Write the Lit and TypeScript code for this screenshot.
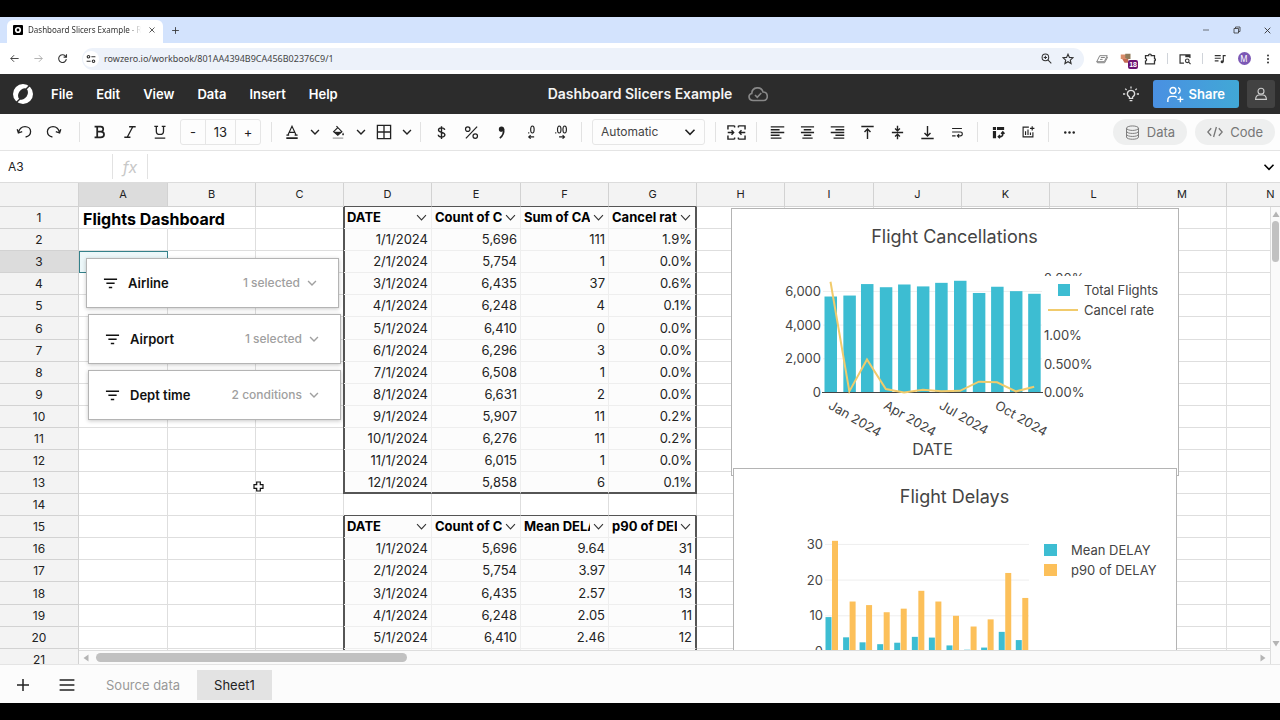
import { LitElement, html, css, svg } from "lit";
import { customElement, property } from "lit/decorators.js";
import { classMap } from "lit/directives/class-map.js";
import { styleMap } from "lit/directives/style-map.js";

const COLUMNS = "ABCDEFGHIJKLMN".split("");
const ROW_COUNT = 21;
const DAYS = [0, 31, 60, 91, 121, 152, 182, 213, 244, 274, 305, 335];
const FLIGHTS = [5696, 5754, 6435, 6248, 6410, 6296, 6508, 6631, 5907, 6276, 6015, 5858];
const CANCELLED = ["111", "1", "37", "4", "0", "3", "1", "2", "11", "11", "1", "6"];
const CANCEL_RATE = ["1.9%", "0.0%", "0.6%", "0.1%", "0.0%", "0.0%", "0.0%", "0.0%", "0.2%", "0.2%", "0.0%", "0.1%"];
const RATE = [1.95, 0.02, 0.58, 0.06, 0, 0.05, 0.02, 0.03, 0.19, 0.18, 0.02, 0.1];
const MEAN_DELAY = [9.64, 3.97, 2.57, 2.05, 2.46, 4.1, 3.9, 1.7, 0.5, 1.1, 5.5, 3.2];
const P90_DELAY = [31, 14, 13, 11, 12, 17, 14, 10, 7, 9, 22, 15];

interface Pivot {
  top: number;
  heads: string[];
  rows: string[][];
}

const PIVOTS: Pivot[] = [
  {
    top: 1,
    heads: ["DATE", "Count of CANCELLED", "Sum of CANCELLED", "Cancel rate"],
    rows: FLIGHTS.map((n, i) => [`${i + 1}/1/2024`, n.toLocaleString("en-US"), CANCELLED[i], CANCEL_RATE[i]]),
  },
  {
    top: 15,
    heads: ["DATE", "Count of CANCELLED", "Mean DELAY", "p90 of DELAY"],
    rows: FLIGHTS.map((n, i) => [`${i + 1}/1/2024`, n.toLocaleString("en-US"), MEAN_DELAY[i].toFixed(2), String(P90_DELAY[i])]),
  },
];

const SLICERS = [
  { name: "Airline", summary: "1 selected", left: 86, top: 75 },
  { name: "Airport", summary: "1 selected", left: 88, top: 131 },
  { name: "Dept time", summary: "2 conditions", left: 88, top: 187 },
];

const icon = (body: unknown, size = 16) =>
  html`<svg width=${size} height=${size} viewBox="0 0 16 16" fill="none" stroke="currentColor" stroke-width="1.3" aria-hidden="true">${body}</svg>`;

const ICONS = {
  undo: svg`<path d="M1.2 5.2 2.4 9l3.8-1.3M2.6 8.7C3.2 5 5.8 2.6 9 2.6c3.2 0 5.6 2.2 5.6 5 0 2.9-2 4.9-5 5.4"/>`,
  redo: svg`<path d="M14.8 5.2 13.6 9 9.8 7.7M13.4 8.7C12.8 5 10.2 2.6 7 2.6c-3.2 0-5.6 2.2-5.6 5 0 2.9 2 4.9 5 5.4"/>`,
  bold: svg`<path stroke-width="2" d="M1.800 1.800h6.9c4 0 4 5.8 0 5.8H5M8.7 7.6c5.200 0 5.200 6.600 0 6.600H1.800M4.800 1.800v12.400"/>`,
  italic: svg`<path stroke-width="1.5" d="M7 2h7.500M1.500 14h7M11.200 2 4.800 14"/>`,
  underline: svg`<path stroke-width="1.5" d="M1.5 1.6h4.3M10 1.6h4.3M3.8 1.6V7c0 5 8.2 5 8.2 0V1.6M2 15h12"/>`,
  textColor: svg`<path d="M3.2 11.6 8 1.4l4.8 10.2M5 8.4h6M1.6 11.6h3.2M11 11.6h3.4"/><path stroke-width="2" d="M1.5 15h13"/>`,
  fill: svg`<path d="M6.200 1.200 8.200 3.200M3 7.600l4.800-4.600 4.600 4.600-4.600 4z"/><path fill="currentColor" stroke="none" d="M3.4 7.600h9l-4.600 4zM13.800 8.6c1.400 2.200 1.200 3.200 0 3.200s-1.400-1 0-3.200z"/><path fill="#fff" stroke="none" d="M5.800 7 8 4.800 10.200 7z"/><path stroke="#aaa" stroke-width="1.6" d="M2 15h12"/>`,
  borders: svg`<path d="M1.4 1.4h13.2v13.2H1.4zM8 1.4v13.2M1.4 8h13.2"/>`,
  chevron: svg`<path stroke-width="1.6" d="m3.500 5.800 4.500 4.500 4.500-4.500"/>`,
  dollar: svg`<path stroke-width="1.5" d="M8 1.2v13.6M11.4 5.2C11 2.4 4.8 2.2 4.8 5.3c0 3.3 6.8 1.8 6.8 5.2 0 3.2-6.6 3.2-7.1-.1"/>`,
  percent: svg`<circle cx="4" cy="4.4" r="2.4"/><circle cx="12" cy="11.8" r="2.4"/><path d="M14 1.8 2 14.2"/>`,
  comma: svg`<circle cx="8" cy="4.4" r="2.2" fill="currentColor"/><path stroke-width="1.8" d="M10.2 4.2c.6 4-.8 7.400-4 9.800"/>`,
  lessDecimal: svg`<ellipse cx="9.6" cy="5.2" rx="2" ry="4"/><path d="M5.4 8.400v1.2M11.6 13.6H5.4M7.6 11.6l-2.2 2 2.2 2"/>`,
  moreDecimal: svg`<ellipse cx="6" cy="5.2" rx="2" ry="4"/><ellipse cx="12.200" cy="5.2" rx="2" ry="4"/><path d="M2 8.400v1.2M5.8 13.6H12M9.8 11.6l2.2 2-2.2 2"/>`,
  merge: svg`<path stroke-width="1.2" d="M6.4 2.4H.8v3M.8 10.6v3h5.6M9.6 2.4h5.6v3M15.2 10.6v3H9.6M6.4 2.4v1.4M9.6 2.4v1.4M6.4 13.6v-1.4M9.6 13.6v-1.4M.600 8h5M3.8 6.2 5.6 8 3.8 9.8M15.400 8h-5M12.2 6.2 10.4 8l1.8 1.8"/>`,
  alignLeft: svg`<path stroke-width="1.5" d="M.8 2h14.4M.8 5h9.4M.8 8h14.4M.8 11h9.4M.8 14h11.4"/>`,
  alignCenter: svg`<path stroke-width="1.5" d="M1 2h14M4 5h8M1 8h14M4 11h8M2.500 14h11"/>`,
  alignRight: svg`<path stroke-width="1.5" d="M.8 2h14.4M5.8 5h9.4M.8 8h14.4M5.8 11h9.4M3.8 14h11.4"/>`,
  alignTop: svg`<path stroke-width="1.5" d="M1.4 1.6h13.2M8 15V4M4.8 7.4 8 4.2l3.2 3.2"/>`,
  alignMiddle: svg`<path stroke-width="1.5" d="M2 8h12M8 .8v5M5.4 3.8 8 6.2l2.6-2.4M8 15.2v-5M5.4 12.2 8 9.8l2.6 2.4"/>`,
  alignBottom: svg`<path stroke-width="1.5" d="M1.4 14.4h13.2M8 1v11M4.8 8.6 8 11.8l3.2-3.2"/>`,
  wrap: svg`<path d="M2.4 4h11.2M2.4 8h9.4c3 0 3 4.4 0 4.4H8.6M10.4 10.4l-2 2 2 2M2.4 12.4h4"/>`,
  pivot: svg`<path fill="currentColor" stroke="none" d="M2 2h3.4v3.4H2zM6.4 2H14v3.4H6.4zM2 6.4h3.4V14H2z"/><path stroke-width="1.6" d="M8 12.4h1.6c2 0 3-1.2 3-3.2V8M10.8 9.4l1.8-2 1.8 2M9.6 10.6l-1.8 1.8 1.8 1.8"/>`,
  chart: svg`<path d="M9 2.4H2.4v11.2h11.2V8.4M5.2 11.4V7M8 11.4V5M10.8 11.4V8.6M12.8 1.4v5M10.3 3.9h5"/>`,
  more: svg`<g fill="currentColor" stroke="none"><circle cx="3.500" cy="8" r="1.300"/><circle cx="8" cy="8" r="1.300"/><circle cx="12.500" cy="8" r="1.300"/></g>`,
  database: svg`<g stroke-width="1"><ellipse cx="8" cy="3.400" rx="6.4" ry="2.4"/><path d="M1.6 3.4v9.4c0 3.2 12.8 3.2 12.8 0V3.4M1.6 6.6c0 3.2 12.8 3.2 12.8 0M1.6 9.8c0 3.2 12.8 3.2 12.8 0"/></g>`,
  code: svg`<path d="M4.2 4.2.8 8l3.4 3.8M11.8 4.2 15.2 8l-3.4 3.8M9.4 3 6.6 13"/>`,
  filter: svg`<path stroke-width="1.6" d="M1 3.4h14M3.6 7.8h8.8M6.2 12.2h3.6"/>`,
  plus: svg`<path stroke-width="1.5" d="M8 2v12M2 8h12"/>`,
  menu: svg`<path stroke-width="1.6" d="M.6 3h14.8M.6 8h14.8M.6 13h14.8"/>`,
  bulb: svg`<path d="M6.4 12.4V11C2.6 8.4 4.6 4.4 8 4.4s5.4 4 1.6 6.6v1.4zM6.6 14.6h2.8M8 .4v2M2.2 2.6l1.4 1.4M13.8 2.6l-1.4 1.4M0 8h2.200M13.800 8H16"/>`,
  people: svg`<circle cx="5.600" cy="4.2" r="2.800"/><path d="M.8 15v-1.600c0-2.400 1.400-3.600 3.600-3.600h2.400c1.200 0 2 .4 2.600 1M10.400 1.500c2.600.8 2.600 4.600 0 5.400M12.600 9.800v5.600M9.800 12.600h5.600"/>`,
  user: svg`<circle cx="8" cy="4.8" r="3.4"/><path d="M1.8 14.2c.2-3.6 2.2-5 4.2-5h4c2 0 4 1.4 4.2 5z"/>`,
  cloud: svg`<path d="M4 13.2C.2 13.2-.2 8.4 3 7.6 3.2 2 10.8 1.6 12 6.4c4.4 0 4.6 6.8.4 6.8zM5.6 8.8l1.8 1.8 3.2-3.4"/>`,
  back: svg`<path d="M14 8H2.6M7.4 3.2 2.6 8l4.8 4.8"/>`,
  forward: svg`<path d="M2 8h11.4M8.6 3.2 13.4 8l-4.8 4.8"/>`,
  reload: svg`<path stroke-width="1.6" d="M13.6 9A5.6 5.6 0 1 1 12 4.2L13.6 6M13.8 1.8V6H9.6"/>`,
  tune: svg`<g stroke-width="1.8"><circle cx="4" cy="4.4" r="2"/><circle cx="12" cy="11.6" r="2"/><path d="M8.6 4.4H15M1 11.6h6.4"/></g>`,
  close: svg`<path stroke-width="1.6" d="m3 3 10 10M13 3 3 13"/>`,
  minimize: svg`<path d="M2 8h12"/>`,
  restore: svg`<path stroke-width="1.6" d="M2 5h9v9H2zM5 5V2h9v9h-3"/>`,
  zoom: svg`<g stroke-width="1.5"><circle cx="6.4" cy="6.4" r="4.8"/><path d="m10 10 5 5M6.4 4v4.8M4 6.4h4.8"/></g>`,
  star: svg`<path stroke-width="1.5" d="m8 1.6 1.9 4.3 4.7.5-3.5 3.1 1 4.6L8 11.7l-4.1 2.4 1-4.6L1.4 6.4l4.7-.5z"/>`,
  pages: svg`<g stroke="#777" stroke-width="1.200"><path d="M5 3.600h10l-4 8H1zM1 11.600l1 1.400h9.500l4-7.500"/><path d="M6.400 6h5.400M5.400 8.600h3.400"/></g>`,
  puzzle: svg`<path stroke-width="1.7" d="M2 3.600h4.200c-.4-3 3.800-3 3.400 0H14V7.600c1.600 0 1.600 2.800 0 2.800v4.200H2v-3.800c2-.4 2-3.200 0-3.600z"/>`,
  sideSearch: svg`<path stroke-width="1.6" d="M6.6 13.4H1.4V2.6h13.2v4"/><path fill="currentColor" stroke="none" d="M8.4 2.6h6.2v3H8.4z"/><g stroke-width="1.5"><circle cx="11" cy="10.4" r="2.4"/><path d="m12.8 12.2 2.6 2.6"/></g>`,
  music: svg`<path stroke-width="1.6" d="M1 3.6h8M1 7h8M1 10.4h5M12.400 11.6V3.4h3.2"/><circle cx="10.8" cy="11.6" r="2" fill="currentColor" stroke="none"/>`,
  dots: svg`<g fill="currentColor" stroke="none"><circle cx="8" cy="2.4" r="1.6"/><circle cx="8" cy="8" r="1.6"/><circle cx="8" cy="13.6" r="1.6"/></g>`,
  extension: svg`<path fill="#d98c6a" stroke="none" d="M1 2h8v6H1z"/><path fill="#8f7a5a" stroke="none" d="M7 1h7v7H9L7 6z"/><path fill="#c46a52" stroke="none" d="M3 8h8v5H6z"/>`,
};

@customElement("browser-chrome")
class BrowserChrome extends LitElement {
  static styles = css`
    :host { display: block; font-family: "Noto Sans", "Open Sans", sans-serif; color: #333; }
    button { border: 0; padding: 0; background: none; color: inherit; display: grid; place-items: center; font: inherit; }
    svg { display: block; }
    .strip { height: 26px; background: #d3e3fd; display: flex; align-items: center; padding: 0 4px 0 7px; }
    .tab { align-self: flex-end; box-sizing: border-box; width: 156px; height: 23px; display: flex; align-items: center; gap: 5px; background: #fff; border-radius: 6px 6px 0 0; padding: 0 5px 4px 6px; font-size: 8px; }
    .favicon { width: 10px; height: 10px; background: #000; color: #fff; border-radius: 1px; display: grid; place-items: center; }
    .tab-title { flex: 1; overflow: hidden; white-space: nowrap; mask-image: linear-gradient(90deg, #000 90%, transparent); }
    .tab button { width: 12px; height: 12px; }
    .new { width: 24px; height: 20px; }
    .window { margin-left: auto; display: flex; }
    .window button { width: 31px; height: 20px; }
    .window button:last-child { width: 18px; margin-left: 6px; }
    .bar { height: 31px; background: #fff; display: flex; align-items: center; padding: 0 0 0 2px; }
    .nav { width: 24px; height: 24px; }
    .nav.off { color: #aaa; }
    .address { flex: 1; height: 22px; margin-left: 8px; border-radius: 11px; background: #edf2fa; display: flex; align-items: center; padding: 0 5px 0 1px; }
    .site { width: 16px; height: 16px; border-radius: 8px; background: #fff; margin-right: 5px; }
    .address input { flex: 1; min-width: 0; border: 0; padding: 0; background: none; font: 9px "Noto Sans", sans-serif; color: #444; }
    .address button:not(.site) { width: 22px; height: 20px; }
    .tools { display: flex; align-items: center; margin-left: 6px; }
    .tools button { width: 24px; height: 24px; }
    .rule { width: 1px; height: 11px; background: #d0d4da; margin: 0 5px; }
    .ext { position: relative; }
    .badge { position: absolute; right: 0; bottom: 2px; background: #6a1070; color: #fff; font: bold 7px/9px "Liberation Sans", sans-serif; padding: 0 1px; border-radius: 2px; }
    .avatar { width: 13px; height: 13px; border-radius: 50%; background: #7c58b5; color: #fff; font-size: 8px; line-height: 13px; }
  `;
  render() {
    return html`
      <div class="strip">
        <div class="tab">
          <span class="favicon">${icon(svg`<circle cx="8" cy="8" r="4.500" stroke-width="3.4"/>`, 8)}</span>
          <span class="tab-title">Dashboard Slicers Example - Row Zero</span>
          <button aria-label="Close tab">${icon(ICONS.close, 8)}</button>
        </div>
        <button class="new" aria-label="New tab">${icon(ICONS.plus, 9)}</button>
        <div class="window">
          <button aria-label="Minimize">${icon(ICONS.minimize, 8)}</button>
          <button aria-label="Restore">${icon(ICONS.restore, 8)}</button>
          <button aria-label="Close window">${icon(ICONS.close, 9)}</button>
        </div>
      </div>
      <div class="bar">
        <button class="nav" aria-label="Back">${icon(ICONS.back, 11)}</button>
        <button class="nav off" aria-label="Forward">${icon(ICONS.forward, 11)}</button>
        <button class="nav" aria-label="Reload">${icon(ICONS.reload, 11)}</button>
        <div class="address">
          <button class="site" aria-label="Site information">${icon(ICONS.tune, 10)}</button>
          <input aria-label="Address" .value=${"rowzero.io/workbook/801AA4394B9CA456B02376C9/1"} />
          <button aria-label="Zoom">${icon(ICONS.zoom, 11)}</button>
          <button aria-label="Bookmark">${icon(ICONS.star, 12)}</button>
        </div>
        <div class="tools">
          <button aria-label="Pages">${icon(ICONS.pages, 12)}</button>
          <button class="ext" aria-label="Extension">${icon(ICONS.extension, 12)}<span class="badge">18</span></button>
          <button aria-label="Extensions">${icon(ICONS.puzzle, 12)}</button>
          <span class="rule"></span>
          <button aria-label="Search side panel">${icon(ICONS.sideSearch, 12)}</button>
          <span class="rule"></span>
          <button aria-label="Media">${icon(ICONS.music, 12)}</button>
          <button aria-label="Profile"><span class="avatar">M</span></button>
          <button aria-label="More">${icon(ICONS.dots, 10)}</button>
        </div>
      </div>
    `;
  }
}

@customElement("workbook-header")
class WorkbookHeader extends LitElement {
  static styles = css`
    :host { display: grid; grid-template-columns: 1fr auto 1fr; align-items: center; height: 40px; background: #2c2c2c; color: #fff; }
    button { border: 0; padding: 0; background: none; color: inherit; font: 600 13px/20px Inter, sans-serif; }
    svg { display: block; }
    .menus { display: flex; align-items: center; gap: 23px; padding-left: 12px; }
    .menus svg { margin-right: -6px; }
    .title { display: flex; align-items: center; gap: 16px; font: 600 14px/20px Inter, sans-serif; color: #f4f4f4; padding-left: 36px; }
    .title svg { color: #888; }
    .actions { display: flex; align-items: center; justify-content: flex-end; gap: 8px; padding-right: 5px; }
    .bulb { color: #ddd; padding: 0 6px; }
    .share { height: 28px; display: flex; align-items: center; gap: 5px; padding: 0 14px; border-radius: 3px; background: linear-gradient(90deg, #4a90e2, #41a8d6); }
    .user { width: 28px; height: 28px; display: grid; place-items: center; border-radius: 3px; background: #424242; color: #ccc; }
  `;
  render() {
    return html`
      <nav class="menus">
        <svg width="22" height="22" viewBox="0 0 22 22" role="img" aria-label="Row Zero">
          <circle cx="11" cy="11" r="10" fill="#fff" />
          <ellipse cx="11" cy="11" rx="4.400" ry="6.200" transform="rotate(32 11 11)" fill="#2c2c2c" />
          <path d="m13.600 6.400 5-5M8.400 15.600l-5 5" stroke="#2c2c2c" stroke-width="1.400" />
        </svg>
        ${["File", "Edit", "View", "Data", "Insert", "Help"].map((m) => html`<button>${m}</button>`)}
      </nav>
      <div class="title"><span>Dashboard Slicers Example</span>${icon(ICONS.cloud, 20)}</div>
      <div class="actions">
        <button class="bulb" aria-label="Tips">${icon(ICONS.bulb, 16)}</button>
        <button class="share">${icon(ICONS.people, 17)}Share</button>
        <button class="user" aria-label="Account">${icon(ICONS.user, 14)}</button>
      </div>
    `;
  }
}

@customElement("format-toolbar")
class FormatToolbar extends LitElement {
  static styles = css`
    :host { display: flex; align-items: center; height: 37px; box-sizing: border-box; padding: 0 5px 0 9px; background: #fdfdfd; border-bottom: 1px solid #e4e4e4; color: #222; font: 13px/18px Inter, sans-serif; }
    button { border: 0; padding: 0; background: none; color: inherit; font: inherit; display: grid; place-items: center; flex: none; }
    svg { display: block; }
    .tool { width: 30px; height: 28px; }
    .drop { width: 16px; height: 28px; }
    .history { display: flex; margin-right: 5px; }
    .rule { width: 1px; height: 20px; margin: 0 5px; background: #e2e2e2; }
    .stepper, .format { box-sizing: border-box; height: 26px; margin: 0 5px; border: 1px solid #e6e6e6; border-radius: 3px; }
    .stepper { display: grid; grid-template-columns: 24px 31px 24px; width: 81px; }
    .stepper input { box-sizing: border-box; width: 31px; border: solid #e6e6e6; border-width: 0 1px; padding: 0; text-align: center; font: inherit; color: inherit; background: none; }
    .format { position: relative; width: 113px; }
    .format select { appearance: none; width: 100%; height: 24px; border: 0; padding: 0 8px; background: none; font: 12px/18px Inter, sans-serif; color: #444; }
    .format svg { position: absolute; right: 6px; top: 4px; pointer-events: none; }
    .modes { margin-left: auto; display: flex; gap: 8px; }
    .mode { display: flex; align-items: center; gap: 7px; height: 26px; padding: 0 12px; border-radius: 13px; background: #eeefef; color: #777; }
  `;
  private tool(name: keyof typeof ICONS, label: string, size = 15) {
    return html`<button class="tool" aria-label=${label}>${icon(ICONS[name], size)}</button>`;
  }
  private drop(label: string) {
    return html`<button class="drop" aria-label=${label}>${icon(ICONS.chevron, 14)}</button>`;
  }
  render() {
    const rule = html`<span class="rule"></span>`;
    return html`
      <div class="history">${this.tool("undo", "Undo", 16)}${this.tool("redo", "Redo", 16)}</div>
      ${rule}${this.tool("bold", "Bold", 14)}${this.tool("italic", "Italic", 14)}${this.tool("underline", "Underline", 14)}
      <div class="stepper">
        <button aria-label="Smaller text">-</button>
        <input aria-label="Font size" .value=${"13"} />
        <button aria-label="Larger text">+</button>
      </div>
      ${rule}${this.tool("textColor", "Text color", 14)}${this.drop("Text colors")}${this.tool("fill", "Fill color", 14)}${this.drop("Fill colors")}
      ${this.tool("borders", "Borders", 16)}${this.drop("Border styles")}${rule}
      ${this.tool("dollar", "Currency")}${this.tool("percent", "Percent")}${this.tool("comma", "Thousands separator")}
      ${this.tool("lessDecimal", "Fewer decimals", 14)}${this.tool("moreDecimal", "More decimals", 14)}${rule}
      <div class="format">
        <select aria-label="Number format"><option>Automatic</option></select>
        ${icon(ICONS.chevron, 16)}
      </div>
      ${rule}${this.tool("merge", "Merge cells", 19)}${rule}
      ${this.tool("alignLeft", "Align left")}${this.tool("alignCenter", "Align center")}${this.tool("alignRight", "Align right")}
      ${this.tool("alignTop", "Align top")}${this.tool("alignMiddle", "Align middle")}${this.tool("alignBottom", "Align bottom")}
      ${this.tool("wrap", "Wrap text", 14)}${rule}${this.tool("pivot", "Pivot table")}${this.tool("chart", "Insert chart", 14)}${rule}
      ${this.tool("more", "More")}
      <div class="modes">
        <button class="mode">${icon(ICONS.database, 15)}Data</button>
        <button class="mode">${icon(ICONS.code, 16)}Code</button>
      </div>
    `;
  }
}

@customElement("formula-bar")
class FormulaBar extends LitElement {
  static styles = css`
    :host { display: flex; align-items: center; height: 32px; box-sizing: border-box; background: #fff; border-bottom: 1px solid #dcdcdc; font: 12px/18px Inter, sans-serif; }
    input { box-sizing: border-box; border: 0; background: none; font: inherit; color: #222; height: 25px; padding: 0 8px; }
    .name { width: 113px; border-right: 1px solid #e2e2e2; }
    .fx { width: 34px; text-align: center; font-size: 16px; font-style: italic; color: #c8c8c8; }
    .formula { flex: 1; border-left: 1px solid #e2e2e2; }
    button { border: 0; padding: 0; width: 22px; height: 24px; display: grid; place-items: center; background: none; }
  `;
  render() {
    return html`
      <input class="name" aria-label="Cell" .value=${"A3"} />
      <span class="fx">fx</span>
      <input class="formula" aria-label="Formula" />
      <button aria-label="Expand formula bar">${icon(ICONS.chevron, 16)}</button>
    `;
  }
}

@customElement("data-slicer")
class DataSlicer extends LitElement {
  @property() name = "";
  @property() summary = "";
  static styles = css`
    :host { display: block; }
    button { box-sizing: border-box; width: 253px; height: 50px; display: flex; align-items: center; gap: 10px; padding: 0 19px 0 16px; border: 1px solid #b4b4b4; background: #fff; box-shadow: 0 1px 4px rgb(0 0 0 / 22%); font: 600 13px/18px Inter, sans-serif; color: #111; }
    svg { display: block; }
    .state { margin-left: auto; display: flex; align-items: center; gap: 5px; font-size: 12px; font-weight: 500; color: #a0a0a0; }
  `;
  render() {
    return html`<button>
      ${icon(ICONS.filter, 15)}<span>${this.name}</span>
      <span class="state">${this.summary}${icon(ICONS.chevron, 14)}</span>
    </button>`;
  }
}

const chartStyles = css`
  :host { display: block; }
  svg { display: block; }
  text { font-family: Inter, sans-serif; font-size: 13px; fill: #444; }
  .heading { font-size: 18px; text-anchor: middle; }
  .axis { font-size: 16px; text-anchor: middle; }
  .tick { text-anchor: end; }
  .frame { fill: #fff; stroke: #b4b4b4; }
  .grid { stroke: #eee; }
  .zero { stroke: #444; }
  .blue { fill: #3dbdd2; }
  .amber { fill: #fcc05a; }
  .line { fill: none; stroke: #f1cb6c; stroke-width: 2; }
  .legend { fill: #fff; }
`;

@customElement("cancellations-chart")
class CancellationsChart extends LitElement {
  static styles = chartStyles;
  render() {
    const x = (i: number) => 93.5 + DAYS[i] * 0.608;
    const y = (n: number) => 184.5 - n * 0.01685;
    const r = (n: number) => 184.5 - n * 56.8;
    return html`<svg width="448" height="268" viewBox="0 0 448 268" role="img" aria-label="Flight Cancellations">
      <rect class="frame" x=".5" y=".5" width="447" height="267" />
      <text class="heading" x="223.500" y="35">Flight Cancellations</text>
      ${[0, 2000, 4000, 6000].map((v) => svg`<path class="grid" d="M92 ${y(v)}H311"/><text class="tick" x="90" y=${y(v) + 4.5}>${v.toLocaleString("en-US")}</text>`)}
      ${FLIGHTS.map((n, i) => svg`<rect class="blue" x=${x(i)} y=${y(n)} width="12.500" height=${184.5 - y(n)} />`)}
      <path class="zero" d="M91 184.500H312" />
      ${[[0, "0.00%"], [0.5, "0.500%"], [1, "1.00%"], [1.5, "1.50%"], [2, "2.00%"]].map(([v, t]) => svg`<text x="313" y=${r(v as number) + 4.5}>${t}</text>`)}
      <polyline class="line" points=${RATE.map((v, i) => `${x(i) + 6},${r(v)}`).join(" ")} />
      ${["Jan", "Apr", "Jul", "Oct"].map((m, k) => svg`<text transform="translate(${x(k * 3) + 3} 200) rotate(30)">${m} 2024</text>`)}
      <text class="axis" x="201.500" y="247">DATE</text>
      <rect class="legend" x="312" y="68" width="120" height="46" />
      <rect class="blue" x="327" y="76" width="12" height="12" />
      <text x="353" y="87">Total Flights</text>
      <path class="line" d="M317 102h30" />
      <text x="353" y="107">Cancel rate</text>
    </svg>`;
  }
}

@customElement("delays-chart")
class DelaysChart extends LitElement {
  static styles = chartStyles;
  render() {
    const x = (i: number) => 92.5 + DAYS[i] * 0.568;
    const y = (n: number) => 183.5 - n * 3.57;
    return html`<svg width="444" height="268" viewBox="0 0 444 268" role="img" aria-label="Flight Delays">
      <rect class="frame" x=".5" y=".5" width="443" height="267" />
      <text class="heading" x="221.500" y="35">Flight Delays</text>
      ${[0, 10, 20, 30].map((v) => svg`<path class="grid" d="M92 ${y(v)}H296"/><text class="tick" x="90" y=${y(v) + 4.5}>${v}</text>`)}
      ${DAYS.map((_, i) => svg`
        <rect class="blue" x=${x(i)} y=${y(MEAN_DELAY[i])} width="6" height=${183.5 - y(MEAN_DELAY[i])} />
        <rect class="amber" x=${x(i) + 6.5} y=${y(P90_DELAY[i])} width="6" height=${183.5 - y(P90_DELAY[i])} />`)}
      <rect class="blue" x="311" y="76" width="13" height="12" />
      <text x="338" y="87">Mean DELAY</text>
      <rect class="amber" x="311" y="96" width="13" height="12" />
      <text x="338" y="107">p90 of DELAY</text>
    </svg>`;
  }
}

@customElement("sheet-grid")
class SheetGrid extends LitElement {
  static styles = css`
    :host { display: block; position: relative; overflow: hidden; min-height: 0; background: #fff; font: 13px/21px Inter, sans-serif; color: #222; }
    table { table-layout: fixed; border-collapse: separate; border-spacing: 0; width: 1315px; }
    col { width: 88px; }
    col:nth-child(4n + 2) { width: 89px; }
    col.gutter { width: 79px; }
    thead tr { height: 24px; }
    tbody tr { height: 22px; }
    tbody tr:nth-child(12n + 6) { height: 23px; }
    th, td { box-sizing: border-box; padding: 0; border: solid #dedede; border-width: 0 1px 1px 0; white-space: nowrap; }
    th.label { font-weight: 400; font-size: 12px; text-align: center; background: #f3f3f3; color: #222; border-color: #d2d2d2; }
    thead th.label { font-size: 11px; }
    th.active { background: #dcdcdc; }
    .cell { height: 21px; overflow: hidden; }
    .spill { overflow: visible; font-size: 16px; font-weight: 700; padding-left: 4px; line-height: 24px; color: #000; }
    .spilled { border-right-color: transparent; }
    .selected { background: #ecf7f9; border-color: #34818a; box-shadow: inset 1px 1px #34818a; }
    .pivot { background: #fcfcfc; border-color: #eee; }
    .number { text-align: right; padding-right: 3px; }
    .head { display: flex; align-items: center; padding: 0 2px 0 3px; font-weight: 700; color: #000; }
    .head span { flex: 1; overflow: hidden; text-align: left; }
    .head button { border: 0; padding: 0; width: 16px; height: 16px; display: grid; place-items: center; background: none; color: #333; }
    .left { box-shadow: -1px 0 #555, inset 1px 0 #555; }
    .right { border-right: 2px solid #555; }
    th.above, td.above { border-bottom-color: #555; }
    .bottom { border-bottom: 2px solid #555; }
    .bottom .cell { height: 20px; }
    .float { position: absolute; }
    .hscroll, .vscroll { position: absolute; display: flex; align-items: center; background: #fafafa; }
    .hscroll { left: 79px; right: 10px; bottom: 0; height: 13px; border-top: 1px solid #ddd; }
    .vscroll { top: 24px; right: 0; bottom: 0; width: 10px; flex-direction: column; box-sizing: border-box; border-left: 1px solid #ddd; }
    .arrow { width: 14px; height: 14px; display: grid; place-items: center; color: #b4b4b4; }
    .vscroll .arrow { width: 9px; }
    .hthumb { width: 311px; height: 9px; margin-left: 3px; border-radius: 5px; background: #c1c1c1; }
    .vthumb { width: 7px; height: 41px; border-radius: 4px; background: #c1c1c1; }
    .end { margin-left: auto; }
    .vscroll .end { margin: auto 0 13px; }
    svg { display: block; }
  `;

  private cell(row: number, col: number) {
    const pivot = PIVOTS.find((p) => row >= p.top && row <= p.top + p.rows.length);
    if (pivot && col >= 3 && col <= 6) {
      const at = row - pivot.top;
      const edges = { pivot: true, left: col === 3, right: col === 6, bottom: at === pivot.rows.length };
      if (at === 0) {
        return html`<td class=${classMap(edges)}>
          <div class="cell head"><span>${pivot.heads[col - 3]}</span><button aria-label="Filter">${icon(svg`<path d="m2.500 5 5.500 6L13.500 5"/>`, 13)}</button></div>
        </td>`;
      }
      return html`<td class=${classMap(edges)}><div class="cell number">${pivot.rows[at - 1][col - 3]}</div></td>`;
    }
    if (row === 1 && col === 0) return html`<td class="spilled"><div class="cell spill">Flights Dashboard</div></td>`;
    const above = col >= 3 && col <= 6 && PIVOTS.some((p) => p.top === row + 1);
    return html`<td class=${classMap({ selected: row === 3 && col === 0, above })}></td>`;
  }

  render() {
    const tri = (d: string) => html`<span class="arrow"><svg width="8" height="8" viewBox="0 0 8 8"><path fill="currentColor" d=${d} /></svg></span>`;
    return html`
      <table>
        <colgroup><col class="gutter" />${COLUMNS.map(() => html`<col />`)}</colgroup>
        <thead>
          <tr>
            <th class="label"></th>
            ${COLUMNS.map((c, i) => html`<th scope="col" class=${classMap({ label: true, active: c === "A", above: i >= 3 && i <= 6 })}>${c}</th>`)}
          </tr>
        </thead>
        <tbody>
          ${Array.from({ length: ROW_COUNT }, (_, r) => html`<tr>
            <th scope="row" class=${classMap({ label: true, active: r === 2 })}>${r + 1}</th>
            ${COLUMNS.map((_c, c) => this.cell(r + 1, c))}
          </tr>`)}
        </tbody>
      </table>
      ${SLICERS.map((s) => html`<data-slicer class="float" style=${styleMap({ left: `${s.left}px`, top: `${s.top}px` })} name=${s.name} summary=${s.summary}></data-slicer>`)}
      <cancellations-chart class="float" style=${styleMap({ left: "731px", top: "25px" })}></cancellations-chart>
      <delays-chart class="float" style=${styleMap({ left: "733px", top: "285px" })}></delays-chart>
      <svg class="float" style=${styleMap({ left: "253px", top: "298px" })} width="11" height="11" viewBox="0 0 11 11" aria-hidden="true">
        <path fill="#fff" stroke="#111" stroke-width="1.200" d="M3.700 1h3.600v2.700H10v3.600H7.300V10H3.700V7.300H1V3.700h2.700z" />
      </svg>
      <div class="vscroll">${tri("M4 1.500 7.500 7h-7z")}<span class="vthumb"></span><span class="end">${tri("M4 6.500.5 1h7z")}</span></div>
      <div class="hscroll">${tri("M1.500 4 6.500.5v7z")}<span class="hthumb"></span><span class="end">${tri("M6.500 4 1.500.5v7z")}</span></div>
    `;
  }
}

@customElement("sheet-tabs")
class SheetTabs extends LitElement {
  static styles = css`
    :host { display: flex; align-items: center; height: 39px; box-sizing: border-box; padding: 2px 0 0 8px; background: #fcfcfc; border-top: 1px solid #e4e4e4; }
    button { border: 0; padding: 0 17px; height: 30px; background: none; font: 13px/18px Inter, sans-serif; color: #999; }
    svg { display: block; }
    .tool { width: 30px; padding: 0; display: grid; place-items: center; color: #222; margin-right: 14px; }
    .tool + .tool { margin-right: 7px; }
    .active { background: #e3e3e3; color: #222; }
  `;
  render() {
    return html`
      <button class="tool" aria-label="Add sheet">${icon(ICONS.plus, 16)}</button>
      <button class="tool" aria-label="All sheets">${icon(ICONS.menu, 16)}</button>
      <button>Source data</button>
      <button class="active">Sheet1</button>
    `;
  }
}

@customElement("app-root")
class AppRoot extends LitElement {
  static styles = css`
    :host { display: flex; flex-direction: column; box-sizing: border-box; height: 100vh; padding: 17px 0; background: #000; overflow: hidden; }
    sheet-grid { flex: 1; }
  `;
  render() {
    return html`
      <browser-chrome></browser-chrome>
      <workbook-header></workbook-header>
      <format-toolbar></format-toolbar>
      <formula-bar></formula-bar>
      <sheet-grid></sheet-grid>
      <sheet-tabs></sheet-tabs>
    `;
  }
}
